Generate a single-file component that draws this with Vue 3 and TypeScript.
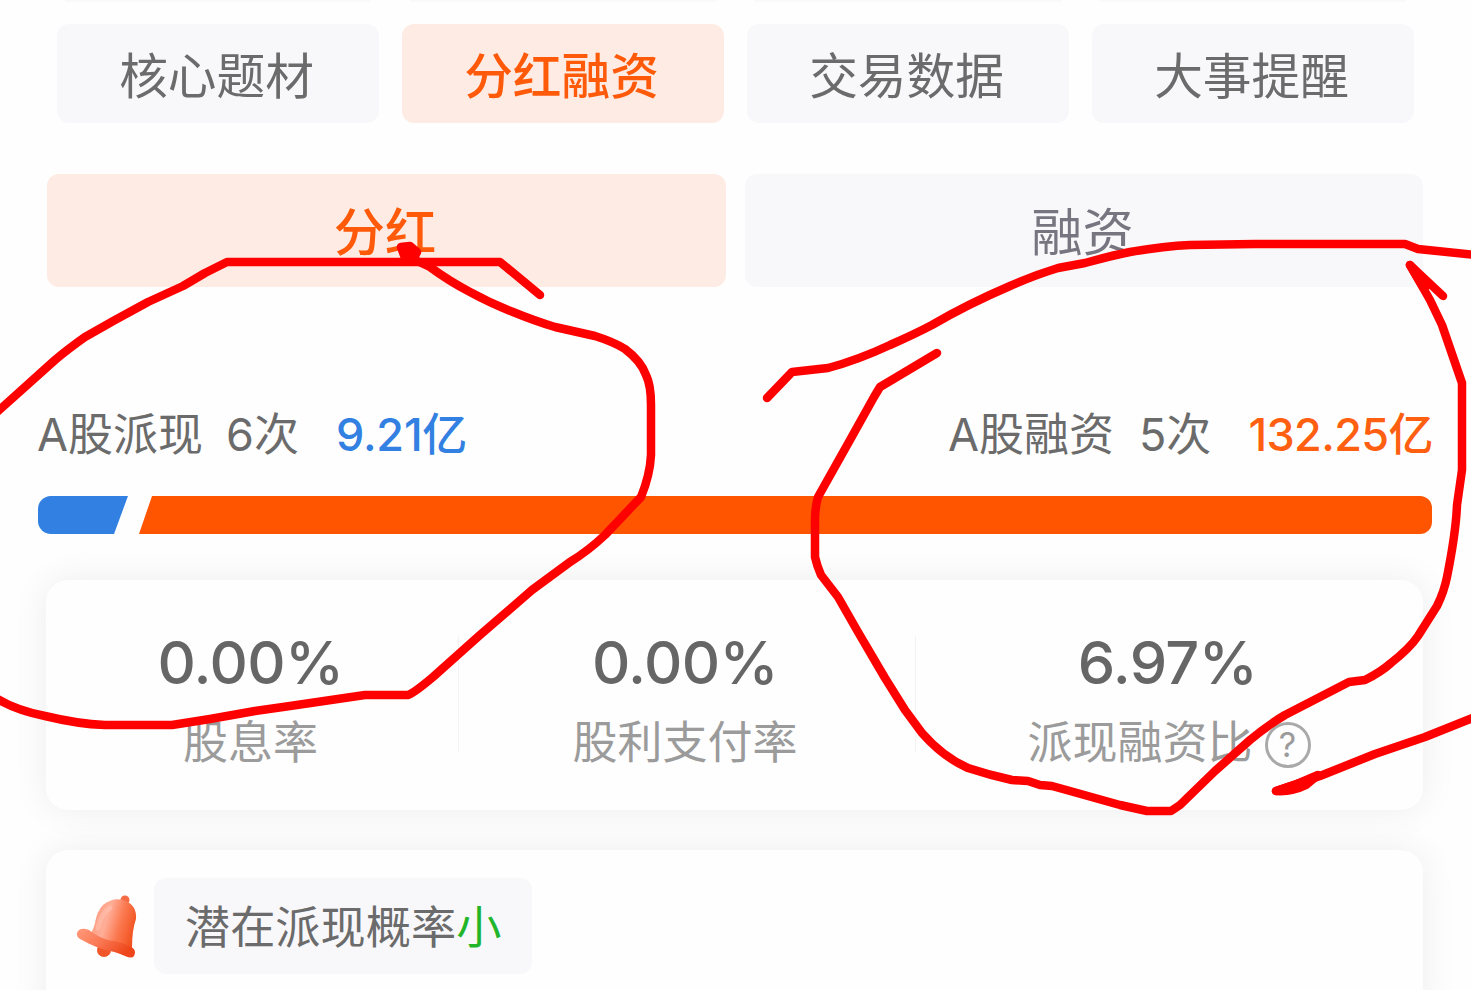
<script setup lang="ts">
interface Tab {
  label: string
  active: boolean
}

interface Metric {
  value: string
  label: string
  help?: boolean
}

const tabs: Tab[] = [
  { label: '核心题材', active: false },
  { label: '分红融资', active: true },
  { label: '交易数据', active: false },
  { label: '大事提醒', active: false },
]

const segments: Tab[] = [
  { label: '分红', active: true },
  { label: '融资', active: false },
]

const metrics: Metric[] = [
  { value: '0.00%', label: '股息率' },
  { value: '0.00%', label: '股利支付率' },
  { value: '6.97%', label: '派现融资比', help: true },
]

const strokes: string[] = [
  'M540 295L500 262H227L205 273L183 286L148 302L115 320L85 337Q68 349 55 360L-4 413',
  'M404 247L415 260L430 267Q449 281 470 292Q490 303 513 312Q535 321 555 327L595 336Q614 342 625 349Q641 361 646 375Q651 385 651 405V455Q650 475 641 497L605 535Q588 551 570 562L532 590L480 635L433 677Q414 693 408 695H365L290 706L255 711L210 719L172 725H105Q78 724 45 716Q15 710 -4 698',
  'M767 398L792 372L828 368Q858 360 890 345Q915 334 932 325Q968 304 1010 286Q1035 275 1058 268L1085 263Q1110 256 1130 252Q1165 246 1190 245L1255 244H1405L1418 249L1475 255',
  'M937 353L880 387L874 397L850 440L818 497Q815 508 815 520V557Q817 566 821 575L838 597L858 632L885 678L905 710L922 733Q943 757 968 768Q989 775 1012 780L1028 781L1040 785L1052 786L1070 791L1120 805L1147 811H1171L1180 805L1215 771L1250 740Q1268 725 1285 715L1349 682L1365 680Q1381 672 1391 663Q1410 648 1418 636L1437 606Q1444 592 1447 577Q1456 532 1457 505L1462 470V383L1442 325L1430 300L1410 265L1443 296',
  'M1475 717L1425 737L1375 754L1320 776L1276 791',
]
</script>

<template>
  <main class="page">
    <div class="previous">
      <i v-for="n in 4" :key="n"></i>
    </div>
    <nav class="tabs">
      <button v-for="t in tabs" :key="t.label" class="tab" :class="{ active: t.active }">{{ t.label }}</button>
    </nav>
    <nav class="segments">
      <button v-for="s in segments" :key="s.label" class="segment" :class="{ active: s.active }">{{ s.label }}</button>
    </nav>

    <section class="summary">
      <div class="group">
        <span class="name">A股派现</span><span class="times">6次</span><b class="blue">9.21亿</b>
      </div>
      <div class="group right">
        <span class="name">A股融资</span><span class="times">5次</span><b class="orange">132.25亿</b>
      </div>
    </section>
    <div class="ratio">
      <i class="paid"></i><i class="raised"></i>
    </div>

    <section class="card metrics">
      <div v-for="m in metrics" :key="m.label" class="metric">
        <strong>{{ m.value }}</strong>
        <span class="caption">{{ m.label }}<span v-if="m.help" class="help"><span>?</span></span></span>
      </div>
    </section>

    <section class="card notice">
      <svg class="bell" viewBox="0 0 62 66">
        <defs>
          <linearGradient id="dome" x1="0.1" y1="0.3" x2="1" y2="0.6">
            <stop offset="0" stop-color="#ff9c80" />
            <stop offset="0.3" stop-color="#ffae98" />
            <stop offset="0.62" stop-color="#fb7950" />
            <stop offset="1" stop-color="#f1501c" />
          </linearGradient>
          <linearGradient id="rim" x1="0" y1="0" x2="1" y2="0.5">
            <stop offset="0" stop-color="#ff9a7c" />
            <stop offset="0.5" stop-color="#f97853" />
            <stop offset="1" stop-color="#ee461a" />
          </linearGradient>
        </defs>
        <circle cx="28" cy="56" r="7" fill="#ef562a" />
        <circle cx="49" cy="6" r="4.5" fill="#f46b44" />
        <path d="M27 11Q38 2 50 7Q61 12 60 25Q56 36 56 54L46 57L13 42Q17 37 19 29Q21 17 27 11Z" fill="url(#dome)" />
        <path d="M2 37Q5 33 13 36Q24 45 37 47Q45 48 55 53Q61 56 58 62Q56 65 49 62Q40 58 34 57Q22 55 4 45Q-1 42 2 37Z" fill="url(#rim)" />
        <path d="M22 34Q26 18 34 14" class="shine" />
      </svg>
      <p class="chance">潜在派现概率<em>小</em></p>
    </section>

    <svg class="marks" viewBox="0 0 1471 990">
      <path v-for="d in strokes" :key="d" :d="d" />
      <path class="blob" d="M401 247L410 246L417 252L414 258L405 258Z" />
      <path class="blob" d="M1410 265L1423 287L1428 285Z" />
      <path class="blob" d="M1276 791L1297 784L1318 775L1306 785Q1292 792 1276 791Z" />
    </svg>
  </main>
</template>

<style>
body {
  margin: 0;
  background: #fefefe;
}
</style>

<style scoped>
.page {
  position: relative;
  width: 1471px;
  height: 990px;
  overflow: hidden;
  background: #fefefe;
  box-sizing: border-box;
  font-family: Inter, "Noto Sans CJK SC", sans-serif;
  color: #6b6b6b;
}
button {
  box-sizing: border-box;
  border: 0;
  padding: 0;
  margin: 0;
  font-family: inherit;
  color: #6b6b6b;
  background: #f8f8fb;
  border-radius: 12px;
}
.previous,
.tabs {
  display: grid;
  grid-template-columns: repeat(4, 322px);
  column-gap: 23px;
  padding-left: 56.5px;
}
.previous {
  height: 24px;
}
.previous i {
  height: 2px;
  margin: 0 8px;
  background: #f9f9fb;
}
.tab {
  height: 99px;
  padding: 6px 2px 0 0;
  font-size: 48.7px;
  line-height: 93px;
}
.tab.active {
  font-weight: 500;
}
.active {
  color: #fe5a0a;
  background: #feece4;
}
.segments {
  display: grid;
  grid-template-columns: 679px 678px;
  column-gap: 19px;
  padding: 51px 0 0 47px;
}
.segment {
  height: 113px;
  padding: 4px 3px 0 0;
  font-size: 51.3px;
  line-height: 109px;
  color: #77757f;
}
.segment.active {
  font-weight: 500;
  color: #fe5a0a;
}
.summary {
  display: flex;
  justify-content: space-between;
  height: 68px;
  margin: 114px 38px 0 37px;
  font-size: 45px;
  line-height: 68px;
  white-space: nowrap;
}
.group {
  display: flex;
}
.times {
  margin-left: 23px;
}
.right .times {
  margin-left: 25px;
}
.group b {
  margin-left: 37px;
  font-weight: 500;
  letter-spacing: -0.2px;
}
.group.right b {
  letter-spacing: -0.6px;
}
.blue {
  color: #3180e2;
}
.orange {
  color: #fe5f10;
}
.ratio {
  display: flex;
  height: 38px;
  margin: 27px 39px 0 38px;
}
.paid {
  width: 90px;
  background: #3180e2;
  border-radius: 13px 0 0 13px;
  clip-path: polygon(0 0, 100% 0, 76px 100%, 0 100%);
}
.raised {
  flex: 1;
  margin-left: 11px;
  background: #ff5500;
  border-radius: 0 12px 12px 0;
  clip-path: polygon(13px 0, 100% 0, 100% 100%, 0 100%);
}
.card {
  width: 1377px;
  margin-left: 46px;
  border-radius: 22px;
  background: #fefefe;
  box-shadow: 0 0 36px rgba(0, 0, 0, 0.07);
}
.metrics {
  display: grid;
  grid-template-columns: 412px 457px 508px;
  height: 230px;
  margin-top: 46px;
}
.metric {
  position: relative;
  display: flex;
  flex-direction: column;
  align-items: center;
  padding-top: 45px;
  padding-right: 3px;
}
.metric + .metric::before {
  content: "";
  position: absolute;
  left: 0;
  top: 56px;
  width: 1px;
  height: 116px;
  background: #f3f3f3;
}
.metric strong {
  height: 74px;
  font-size: 59.5px;
  font-weight: 500;
  line-height: 74px;
  letter-spacing: -0.6px;
  color: #666;
}
.caption {
  display: flex;
  align-items: center;
  height: 66px;
  margin-top: 11px;
  font-size: 45px;
  line-height: 66px;
  color: #9b9b9b;
}
.metric:last-child {
  padding-right: 0;
}
.metric:last-child strong {
  margin-right: 3px;
}
.help {
  box-sizing: border-box;
  display: grid;
  place-items: center;
  width: 46px;
  height: 46px;
  margin: 4px 0 0 12px;
  border: 3px solid #a9a9a9;
  border-radius: 50%;
  font-size: 34px;
  line-height: 40px;
}
.notice {
  display: flex;
  align-items: flex-start;
  height: 180px;
  margin-top: 40px;
}
.bell {
  width: 62px;
  height: 66px;
  margin: 44px 0 0 30px;
}
.shine {
  fill: none;
  stroke: #ffc5b5;
  stroke-width: 5;
  stroke-linecap: round;
  opacity: 0.5;
}
.chance {
  box-sizing: border-box;
  width: 378px;
  height: 96px;
  margin: 28px 0 0 16px;
  padding: 3px 0 0 31px;
  border-radius: 12px;
  background: #f8f8fb;
  font-size: 45.2px;
  line-height: 94px;
  white-space: nowrap;
}
.chance em {
  font-style: normal;
  color: #22b52a;
}
.marks {
  position: absolute;
  inset: 0;
  width: 1471px;
  height: 990px;
  fill: none;
  stroke: #ff0000;
  stroke-width: 8.5;
  stroke-linecap: round;
  stroke-linejoin: round;
}
.marks .blob {
  fill: #ff0000;
}
</style>
